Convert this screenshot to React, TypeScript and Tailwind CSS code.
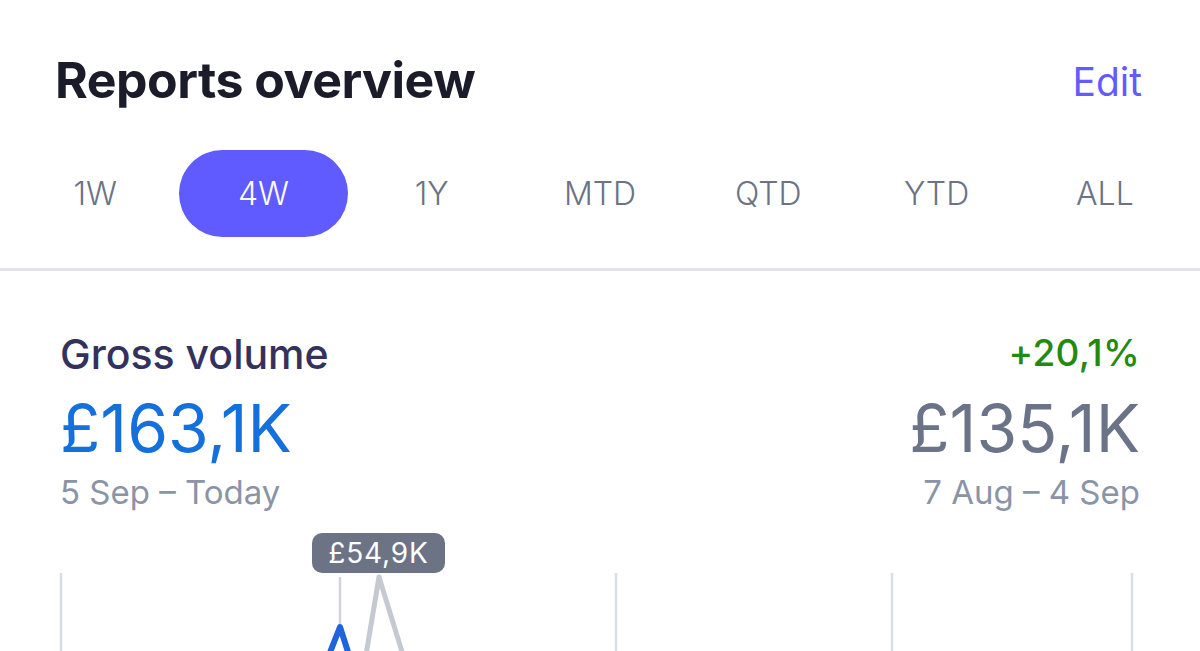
import React, { useState } from 'react';

const RANGES = ['1W', '4W', '1Y', 'MTD', 'QTD', 'YTD', 'ALL'];

const GrossChart: React.FC = () => (
    <div className="relative h-[121px] w-full">
        <svg width="1200" height="121" viewBox="0 0 1200 121" className="absolute inset-0">
            {[61, 616, 892, 1132].map(x => (
                <line key={x} x1={x} y1={43} x2={x} y2={130} stroke="#d9dce1" strokeWidth={2.5} />
            ))}
            <line x1={340} y1={47} x2={340} y2={97} stroke="#d0d4da" strokeWidth={2.5} />
            <path d="M366 125 L379 47 L403 125" fill="none" stroke="#c5c9d1" strokeWidth={5} strokeLinejoin="round" />
            <path d="M329 125 L340 97 L349 125" fill="none" stroke="#1f63dd" strokeWidth={6} strokeLinejoin="round" strokeLinecap="round" />
        </svg>
        {/* hover tooltip */}
        <div className="absolute left-[312px] top-[3px] w-[133px] h-[40px] rounded-[10px] bg-[#6b7385] text-white text-[28px] leading-none flex items-center justify-center tracking-[0.03em]">
            £54,9K
        </div>
    </div>
);

const App: React.FC = () => {
    const [range, setRange] = useState('4W');

    return (
        <div className="w-[1200px] h-[651px] overflow-hidden bg-white font-['Inter',sans-serif]">
            <header className="flex items-start justify-between pl-[55px] pr-[58px] pt-[55px]">
                <h1 className="text-[50px] leading-none font-bold text-[#1b1b29] tracking-[-0.01em]">Reports overview</h1>
                <button className="mt-[7px] text-[39px] leading-none text-[#635bff]">Edit</button>
            </header>

            <nav className="grid grid-cols-7 px-[11px] mt-[45px]">
                {RANGES.map(r => (
                    <button
                        key={r}
                        onClick={() => setRange(r)}
                        className={`h-[87px] rounded-full flex items-center justify-center text-[32px] leading-none font-light ${range === r ? 'bg-[#5f5bff] text-white' : 'text-[#6b7385]'}`}
                    >
                        {r}
                    </button>
                ))}
            </nav>

            <div className="h-[3px] bg-[#e3e3e8] mt-[31px]" />

            <section className="px-[60px] pt-[63px]">
                <div className="flex items-start justify-between h-[41px]">
                    <h2 className="text-[41px] leading-none font-medium text-[#32325d]">Gross volume</h2>
                    <span className="text-[37px] leading-none font-medium text-[#23890f] tracking-[0.01em]">+20,1%</span>
                </div>
                <div className="flex items-start justify-between mt-[20px] h-[66px] text-[66px] leading-none">
                    <span className="text-[#1470dc]">£163,1K</span>
                    <span className="text-[#6b7388]">£135,1K</span>
                </div>
                <div className="flex items-start justify-between mt-[15px] h-[33px] text-[33px] leading-none text-[#8a94a6]">
                    <span>5 Sep – Today</span>
                    <span>7 Aug – 4 Sep</span>
                </div>
            </section>

            <div className="mt-[21px]">
                <GrossChart />
            </div>
        </div>
    );
};

export default App;
